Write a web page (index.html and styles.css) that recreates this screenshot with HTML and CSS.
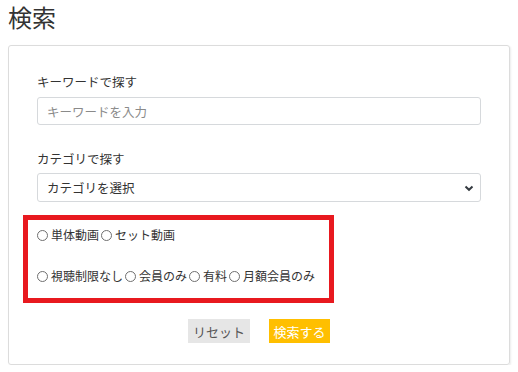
FILE: index.html
```html
<!DOCTYPE html>
<html lang="ja">
<head>
    <meta charset="UTF-8">
    <meta name="viewport" content="width=device-width, initial-scale=1.0">
    <title>検索</title>
    <link rel="stylesheet" href="styles.css">
</head>
<body>
    <div class="page">
        <h1 class="title">検索</h1>
        <form class="search_box">
            <div class="field">
                <label class="field_label" for="keyword">キーワードで探す</label>
                <input type="text" id="keyword" class="text_input" placeholder="キーワードを入力">
            </div>
            <div class="field field_cat">
                <label class="field_label" for="category">カテゴリで探す</label>
                <div class="select_wrap">
                    <select id="category" class="select_input">
                        <option>カテゴリを選択</option>
                    </select>
                    <svg class="select_arrow" width="10" height="8" viewBox="0 0 10 8"><path d="M1.5 2.5 L5 5.8 L8.5 2.5" fill="none" stroke="#343a40" stroke-width="2"/></svg>
                </div>
            </div>
            <div class="radio_area">
                <div class="radio_row">
                    <label class="radio_item"><input type="radio" name="kind">単体動画</label>
                    <label class="radio_item"><input type="radio" name="kind">セット動画</label>
                </div>
                <div class="radio_row">
                    <label class="radio_item"><input type="radio" name="limit">視聴制限なし</label>
                    <label class="radio_item"><input type="radio" name="limit">会員のみ</label>
                    <label class="radio_item"><input type="radio" name="limit">有料</label>
                    <label class="radio_item"><input type="radio" name="limit">月額会員のみ</label>
                </div>
            </div>
            <div class="btns">
                <button type="reset" class="btn btn_reset">リセット</button>
                <button type="button" class="btn btn_search">検索する</button>
            </div>
        </form>
    </div>
</body>
</html>
```

FILE: styles.css
```css
body{margin: 0;background: #fff;color: #333;font-family: "Noto Sans CJK JP", sans-serif;}

.page{padding: 0 8px;}
.title{margin: 0 0 11px;font-size: 24px;line-height: 34px;font-weight: normal;color: #333;}

.search_box{border: 1px solid #dcdcdc;border-radius: 3px;padding: 27px 28px 21px;box-shadow: 1px 1px 2px rgba(0,0,0,0.08);font-size: 12.5px;}

.field{display: flex;flex-direction: column;}
.field_cat{margin-top: 25px;}
.field_label{line-height: 18px;margin-bottom: 6px;color: #333;}
.field_cat .field_label{margin-bottom: 5px;}

.text_input,.select_input{box-sizing: border-box;width: 100%;border: 1px solid #d6d9dc;border-radius: 3px;font: inherit;color: #333;background: #fff;}
.text_input{height: 28px;padding: 0 9px;}
.text_input::placeholder{color: #8a8a8a;}

.select_wrap{position: relative;}
.select_input{height: 29px;padding: 0 9px;appearance: none;-webkit-appearance: none;}
.select_arrow{position: absolute;right: 7px;top: 11px;}

.radio_area{margin: 13px 0 0 -14px;width: 292px;border: 5px solid #e8191f;padding: 7px 0 14px 9px;display: flex;flex-direction: column;gap: 25px;font-size: 12px;}
.radio_row{display: flex;gap: 2px;line-height: 16px;}
.radio_item{display: flex;align-items: center;}
.radio_item input{appearance: none;-webkit-appearance: none;width: 11px;height: 11px;margin: 0 3px 0 0;border: 1px solid #6f6f6f;border-radius: 50%;background: #fff;}

.btns{display: flex;justify-content: center;gap: 19px;margin-top: 16px;}
.btn{border: 0;border-radius: 0;height: 24px;padding: 0;font: inherit;font-size: 13px;white-space: nowrap;cursor: pointer;}
.btn_reset{background: #e6e6e6;color: #555;width: 62px;}
.btn_search{background: #ffbf00;color: #fff;width: 61px;}
```
